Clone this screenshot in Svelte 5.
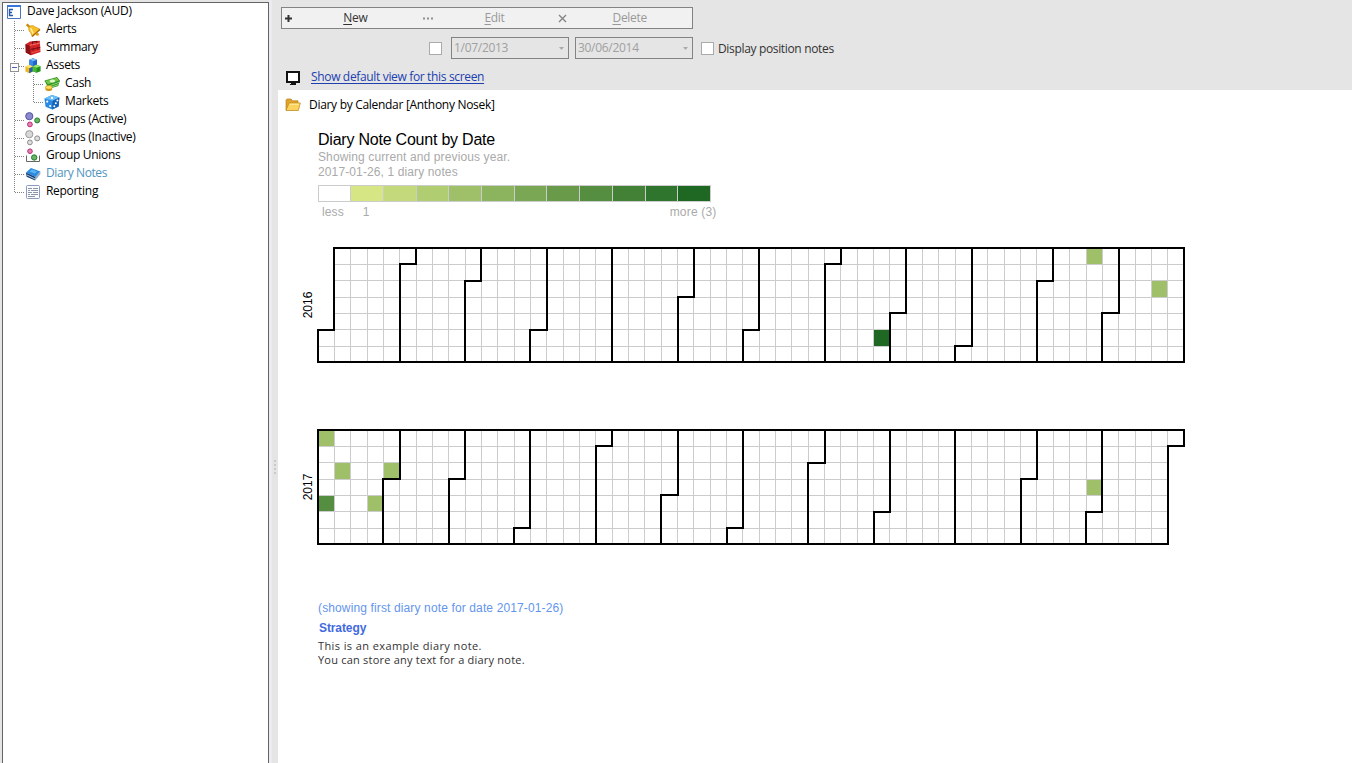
<script>
  const tree = [
    { label: 'Alerts', icon: 'bell' },
    { label: 'Summary', icon: 'case' },
    { label: 'Assets', icon: 'cubes', box: true },
    { label: 'Cash', icon: 'cash', child: true },
    { label: 'Markets', icon: 'dice', child: true },
    { label: 'Groups (Active)', icon: 'active' },
    { label: 'Groups (Inactive)', icon: 'inactive' },
    { label: 'Group Unions', icon: 'union' },
    { label: 'Diary Notes', icon: 'book', current: true },
    { label: 'Reporting', icon: 'report' }
  ];

  const mix = (t) => {
    const a = [214, 230, 133], b = [30, 104, 35];
    return `rgb(${a.map((v, i) => Math.round(v + (b[i] - v) * t)).join(',')})`;
  };
  const swatches = Array.from({ length: 12 }, (_, i) => ({
    x: Math.floor(32.7 * i),
    w: Math.floor(32.7 * (i + 1)) - Math.floor(32.7 * i),
    fill: i ? mix((i - 1) / 10) : '#fff'
  }));

  const size = 16.34;
  const cell = (n) => Math.floor(n * size + 0.02);
  const edge = (n) => Math.round(n * size + 0.03);

  function calendar(year, marks) {
    const first = new Date(Date.UTC(year, 0, 1)).getUTCDay();
    const total = (Date.UTC(year + 1, 0, 1) - Date.UTC(year, 0, 1)) / 86400000;
    const days = [];
    for (let d = 0; d < total; d++) {
      const c = Math.floor((d + first) / 7), r = (d + first) % 7;
      const level = marks[`${c},${r}`];
      days.push({
        x: cell(c), y: cell(r),
        w: cell(c + 1) - cell(c), h: cell(r + 1) - cell(r),
        fill: level === undefined ? '#fff' : mix(level)
      });
    }
    let path = '';
    for (let m = 0; m <= 12; m++) {
      const n = (Date.UTC(year, m, 1) - Date.UTC(year, 0, 1)) / 86400000 + first;
      const c = Math.floor(n / 7), r = n % 7;
      path += r
        ? `M${edge(c + 1)} 0V${edge(r)}H${edge(c)}V${edge(7)}`
        : `M${edge(c)} 0V${edge(7)}`;
    }
    const last = total + first;
    const lc = Math.floor(last / 7), lr = last % 7;
    path += `M${edge(first ? 1 : 0) - 1} 0H${edge(lr ? lc + 1 : lc) + 1}`;
    path += `M-1 ${edge(7)}H${edge(lc) + 1}`;
    return { year, days, path };
  }

  const years = [
    calendar(2016, { '47,0': 0.3, '51,2': 0.3, '34,5': 1 }),
    calendar(2017, { '0,0': 0.3, '1,2': 0.3, '4,2': 0.3, '0,4': 0.7, '3,4': 0.3, '47,3': 0.3 })
  ];
</script>

{#snippet icon(name)}
  <svg class="icon" width="16" height="16" viewBox="0 0 16 16">
    {#if name === 'bell'}
      <path d="M.8 3.2L2.6 1.6 5.6 4.4 4 6z" fill="#c98a12"/>
      <path d="M4 5.5C5.5 3 8 3 9.5 4.5L15 7.2 7 14.6C6.4 12 6 11 4.5 9.4 3.6 8.2 3.4 6.8 4 5.5z" fill="#f7bf2a" stroke="#cf8f10" stroke-width=".6"/>
      <path d="M5.6 6.2C6.5 8.5 7.5 9.5 8 11.5" stroke="#ffef9c" stroke-width="1.7" fill="none"/>
      <path d="M15 7.4L7.2 14.6" stroke="#a8690a" stroke-width="1.3"/>
      <circle cx="12.4" cy="12.2" r="1.5" fill="#e39a14"/>
    {:else if name === 'case'}
      <path d="M.5 4.2L5 1.6 14.8.8 15.5 12 6 15.2.8 12.5z" fill="#d42427"/>
      <path d="M.5 4.2L4.6 5.4 6 15.2.8 12.5z" fill="#8a1115"/>
      <path d="M4.8 5.2L15 3" stroke="#f4786f" stroke-width="1.1"/>
      <path d="M7.5 4.2V2l4.2-.7v2" fill="none" stroke="#6f1216" stroke-width="1.1"/>
      <path d="M5.6 9.4l9.7-2M8.2 7.8v3M12.8 6.8v3" stroke="#7a1014" stroke-width="1"/>
      <path d="M6.4 12.8l8.4-2.4" stroke="#ea504a"/>
    {:else if name === 'cubes'}
      <path d="M4.3 1.8L8 .3l4 1.5v5L8.2 8.4l-3.9-1.6z" fill="#1d62cc"/>
      <path d="M4.3 1.8L8 .3l4 1.5-3.8 1.5z" fill="#7dbcf7"/>
      <path d="M4.3 1.8l3.9 1.5v5.1L4.3 6.8z" fill="#3b8ae6"/>
      <path d="M.4 8.6L4.2 7l3.6 1.6v5L4.2 15.2.4 13.6z" fill="#efb81d"/>
      <path d="M4.2 10l3.6-1.4v5L4.2 15.2z" fill="#285ca8"/>
      <path d="M.4 8.6L4.2 7l3.6 1.6L4.2 10z" fill="#ffe477"/>
      <path d="M7.8 8.2l3.8-1.5 4 1.5v5l-4 1.6-3.8-1.6z" fill="#23901d"/>
      <path d="M7.8 8.2l3.8 1.5v5.1l-3.8-1.6z" fill="#46bb35"/>
      <path d="M7.8 8.2l3.8-1.5 4 1.5-4 1.5z" fill="#98e673"/>
    {:else if name === 'cash'}
      <path d="M1 5L13 1.6l2.7 3.5-1.4 4.8-9.8 3z" fill="#2d981f"/>
      <path d="M.8 4.8L13 1.4l2.7 3.4L3.8 8.8z" fill="#6fc648" stroke="#278419" stroke-width=".6"/>
      <ellipse cx="8.4" cy="5" rx="2.8" ry="1.5" fill="#dff7c3"/>
      <path d="M5 10l10-3.6M5 12l9.6-3.5" stroke="#c5ecab" stroke-width=".7"/>
      <ellipse cx="4.8" cy="13" rx="3.4" ry="1.9" fill="#c98a0c"/>
      <ellipse cx="4.8" cy="11.4" rx="3.4" ry="1.9" fill="#ffe060" stroke="#c58f11" stroke-width=".7"/>
    {:else if name === 'dice'}
      <path d="M.4 4.4L8 1l7.4 2.4-.8 9.2L8.2 15.6 1.6 12.8z" fill="#2a89e2"/>
      <path d="M.4 4.4L8 1l7.4 2.4L8.6 6.8z" fill="#6dbdf6"/>
      <path d="M8.6 6.8l6.8-3.4-.8 9.2-6.4 3z" fill="#1661b8"/>
      <g fill="#fff"><circle cx="8" cy="3.9" r="1.1"/><circle cx="3.2" cy="7.6" r="1.1"/><circle cx="6.2" cy="12" r="1.1"/><circle cx="10.3" cy="12.3" r="1"/><circle cx="11.8" cy="9.3" r="1"/><circle cx="13.4" cy="6.5" r="1"/></g>
    {:else if name === 'active' || name === 'inactive'}
      {@const on = name === 'active'}
      <circle cx="4.3" cy="4.2" r="3.6" fill={on ? '#8b8ace' : '#d8d8d8'} stroke={on ? '#5755a4' : '#999'}/>
      <circle cx="12.2" cy="8.4" r="2.5" fill={on ? '#69b567' : '#dedede'} stroke={on ? '#277c2e' : '#8a8a8a'}/>
      <circle cx="4.9" cy="12.4" r="2.4" fill={on ? '#e980b4' : '#dedede'} stroke={on ? '#b52b72' : '#8a8a8a'}/>
    {:else if name === 'union'}
      <path d="M1.5 7.5v6h13v-6" fill="none" stroke="#666"/>
      <circle cx="5" cy="3.2" r="2.3" fill="#e980b4" stroke="#b52b72"/>
      <circle cx="9.2" cy="9.5" r="2.7" fill="#69b567" stroke="#277c2e"/>
    {:else if name === 'book'}
      <path d="M1 6.6L6 2l9.4 3.6-4.8 5.4z" fill="#2b8be0"/>
      <path d="M4.5 5.5L7 3.5l5 2-2.2 2z" fill="#60b3f1"/>
      <path d="M1 6.6l9.6 4.4-.4 3.6L1.6 10.8z" fill="#123e78"/>
      <path d="M10.6 11l4.8-5.4v2.4l-5.2 6.6z" fill="#8fa9c4"/>
      <path d="M2 9l8.2 4" stroke="#dae7f3" stroke-width=".8"/>
    {:else if name === 'report'}
      <rect x="1.5" y="1.5" width="13" height="13" rx="1" fill="#fbfcff" stroke="#8b9bc0"/>
      <path d="M3 4.5h4M8 4.5h5M3 6.5h2M6 6.5h7M3 8.5h4M8 8.5h5M3 10.5h2M6 10.5h7M3 12.5h7" stroke="#8d95a5"/>
    {/if}
  </svg>
{/snippet}

<div class="app">
  <aside>
    <div class="row root">
      <svg width="16" height="16" viewBox="0 0 16 16">
        <path d="M1.5 1.5h13v13h-13z" fill="#fff" stroke="#4776bd"/>
        <path d="M1 2h14" stroke="#3a75d8" stroke-width="2"/>
        <path d="M7 5.5H3.5v6H7M3.5 8.5H6" fill="none" stroke="#2459ad" stroke-width="1.4"/>
      </svg>
      <span>Dave Jackson (AUD)</span>
    </div>
    {#each tree as item, i}
      <div class="row" class:current={item.current}>
        <svg class="lines" width={item.child ? 41 : 22} height="18" shape-rendering="crispEdges">
          <path d={i === tree.length - 1 ? 'M11.5 0V10' : 'M11.5 0V18'} />
          {#if item.child}
            <path d={item.label === 'Cash' ? 'M30.5 0V18' : 'M30.5 0V10'} />
            <path d="M31 9.5H41" />
          {:else}
            <path d="M12 9.5H22" />
          {/if}
          {#if item.box}
            <rect x="7.5" y="6.5" width="8" height="8" fill="#fff" stroke="#929292" />
            <path class="minus" d="M9 10.5h5" />
          {/if}
        </svg>
        {@render icon(item.icon)}
        <span>{item.label}</span>
      </div>
    {/each}
  </aside>
  <div class="splitter"><i></i><i></i><i></i><i></i></div>

  <main>
    <header>
      <div class="actions">
        <button class="on"><svg width="7" height="7"><path d="M3.5 0v7M0 3.5h7" stroke="#333" stroke-width="2"/></svg><span><u>N</u>ew</span></button>
        <button><svg width="12" height="7"><path d="M1 3.5h2M5 3.5h2M9 3.5h2" stroke="#8f8f8f" stroke-width="2"/></svg><span><u>E</u>dit</span></button>
        <button><svg width="9" height="9"><path d="M1 1l7 7M8 1L1 8" stroke="#858585" stroke-width="1.4"/></svg><span><u>D</u>elete</span></button>
      </div>
      <div class="filters">
        <span class="check"></span>
        <div class="date first">1/07/2013<svg width="5" height="3"><path d="M0 0h5L2.5 3z" fill="#aaa"/></svg></div>
        <div class="date">30/06/2014<svg width="5" height="3"><path d="M0 0h5L2.5 3z" fill="#aaa"/></svg></div>
        <span class="check"></span>
        <span class="note-label">Display position notes</span>
      </div>
      <div class="view">
        <svg width="15" height="15" viewBox="0 0 15 15"><path d="M1 1h12v10H1z" fill="#fff" stroke="#111" stroke-width="2"/><path d="M5 12h5v1H5zM4 13h6v1H4z" fill="#111"/></svg>
        <span class="link">Show default view for this screen</span>
      </div>
    </header>
    <section>
      <div class="title">
        <svg width="16" height="14" viewBox="0 0 16 14">
          <path d="M1 12V2.2L2 1h4l1.5 1.8H13V6z" fill="#dfa42b" stroke="#b8811c" stroke-width=".7"/>
          <path d="M1 12.5L4 5h11.3l-2 7.5z" fill="#fbd35d" stroke="#c38d23" stroke-width=".8"/>
          <path d="M4.6 6.2h9.2" stroke="#fff0a5"/>
        </svg>
        <span>Diary by Calendar [Anthony Nosek]</span>
      </div>
      <div class="chart">
        <h1>Diary Note Count by Date</h1>
        <p class="grey">Showing current and previous year.</p>
        <p class="grey">2017-01-26, 1 diary notes</p>
        <svg class="legend" width="393" height="17" shape-rendering="crispEdges">
          {#each swatches as s}
            <rect x={s.x + 0.5} y="0.5" width={s.w} height="16" fill={s.fill} stroke="#ccc" />
          {/each}
        </svg>
        <div class="scale"><span>less</span><span>1</span><span>more (3)</span></div>
        {#each years as y}
          <svg class="year" width="888" height="118" viewBox="-20 -2 888 118">
            <text transform="translate(-6.3 57) rotate(-90)" text-anchor="middle">{y.year}</text>
            <g shape-rendering="crispEdges">
              {#each y.days as d}
                <rect x={d.x + 0.5} y={d.y + 0.5} width={d.w} height={d.h} fill={d.fill} stroke="#ccc" />
              {/each}
              <path d={y.path} fill="none" stroke="#000" stroke-width="2" />
            </g>
          </svg>
        {/each}
        <p class="showing">(showing first diary note for date 2017-01-26)</p>
        <p class="strategy">Strategy</p>
        <p class="body">This is an example diary note.</p>
        <p class="body second">You can store any text for a diary note.</p>
      </div>
    </section>
  </main>
</div>

<style>
  :global(body) { margin: 0; overflow: hidden; }
  .app { display: flex; width: 1352px; height: 763px; background: #e5e5e5; overflow: hidden; font: 12px/18px "Open Sans", "Noto Sans", sans-serif; color: #000; box-sizing: border-box; }
  p, h1 { margin: 0; font-weight: 400; white-space: nowrap; }
  svg { display: block; flex: none; }
  aside { box-sizing: border-box; width: 267px; height: 762px; margin: 2px 0 0 2px; border: 1px solid #646464; border-bottom: 0; background: #fff; flex: none; letter-spacing: -0.3px; }
  .row { display: flex; height: 18px; white-space: nowrap; }
  .row > span { margin-left: 5px; position: relative; top: -1px; }
  .root { letter-spacing: -0.22px; }
  .root svg { margin: 1px 0 0 3px; }
  .icon { margin-top: 1px; }
  .lines path { stroke: #808080; stroke-dasharray: 1 1; fill: none; }
  .lines .minus { stroke: #4b63a7; stroke-dasharray: none; }
  .current { color: #4f94bd; letter-spacing: -0.4px; }
  .splitter { width: 9px; flex: none; background: linear-gradient(90deg, #ebebf0 3px, #e5e5e5 3px); display: flex; flex-direction: column; align-items: center; justify-content: center; gap: 2px; box-sizing: border-box; padding: 170px 0 0 2px; }
  .splitter i { width: 2px; height: 2px; background: #c8c8c8; }
  main { flex: 1; display: flex; flex-direction: column; }
  header { height: 90px; box-sizing: border-box; padding: 7px 0 0 3px; }
  .actions { display: flex; box-sizing: border-box; width: 412px; height: 22px; border: 1px solid #838383; background: #f1f1f1; }
  button { all: unset; display: flex; align-items: center; flex: 1; color: #999; letter-spacing: -0.3px; padding-left: 3px; box-sizing: border-box; }
  button span { flex: 1; text-align: center; }
  .on { color: #333; }
  u { text-underline-offset: 2px; }
  .filters { display: flex; align-items: center; height: 22px; margin-top: 8px; padding-left: 148px; }
  .check { width: 11px; height: 11px; border: 1px solid #aaa; background: #fff; }
  .date { display: flex; align-items: center; justify-content: space-between; box-sizing: border-box; width: 118px; height: 22px; border: 1px solid #838383; padding: 0 4px 0 2px; color: #a0a0a0; margin-right: 8px; letter-spacing: -0.3px; }
  .date.first { margin-left: 9px; margin-right: 6px; }
  .note-label { margin-left: 4px; padding-top: 2px; color: #333; letter-spacing: -0.34px; }
  .view { display: flex; align-items: center; margin-top: 9px; padding-left: 5px; height: 18px; }
  .view svg { position: relative; top: 1px; }
  .link { margin-left: 10px; color: #2040b0; text-decoration: underline; text-underline-offset: 2px; letter-spacing: -0.34px; }
  section { background: #fff; flex: 1; }
  .title { display: flex; align-items: center; padding: 6px 0 0 7px; letter-spacing: -0.3px; }
  .title span { margin-left: 8px; }
  .chart { margin-left: 40px; font-family: "Liberation Sans", Arial, sans-serif; }
  h1 { font-size: 16px; line-height: 20px; padding-top: 16px; letter-spacing: -0.22px; }
  .grey, .scale { color: #aaa; line-height: 15px; letter-spacing: 0.12px; }
  .legend { margin-top: 5px; }
  .scale { display: flex; padding: 3px 0 0 4px; }
  .scale span:nth-child(2) { margin-left: 19px; }
  .scale span:nth-child(3) { margin-left: 300px; letter-spacing: 0.2px; }
  .year { margin: 26px 0 0 -20px; }
  .year + .year { margin-top: 64px; }
  .year text { font-size: 12px; }
  .showing { margin-top: 53px; color: #6495ed; letter-spacing: 0.13px; }
  .strategy { font-weight: 700; color: #4169e1; margin: 2px 0 0 1px; letter-spacing: -0.1px; }
  .body { font: 11px/14px "Open Sans", sans-serif; color: #333; margin-top: 2px; letter-spacing: 0.4px; }
  .second { margin-top: 0; letter-spacing: 0.22px; }
</style>
